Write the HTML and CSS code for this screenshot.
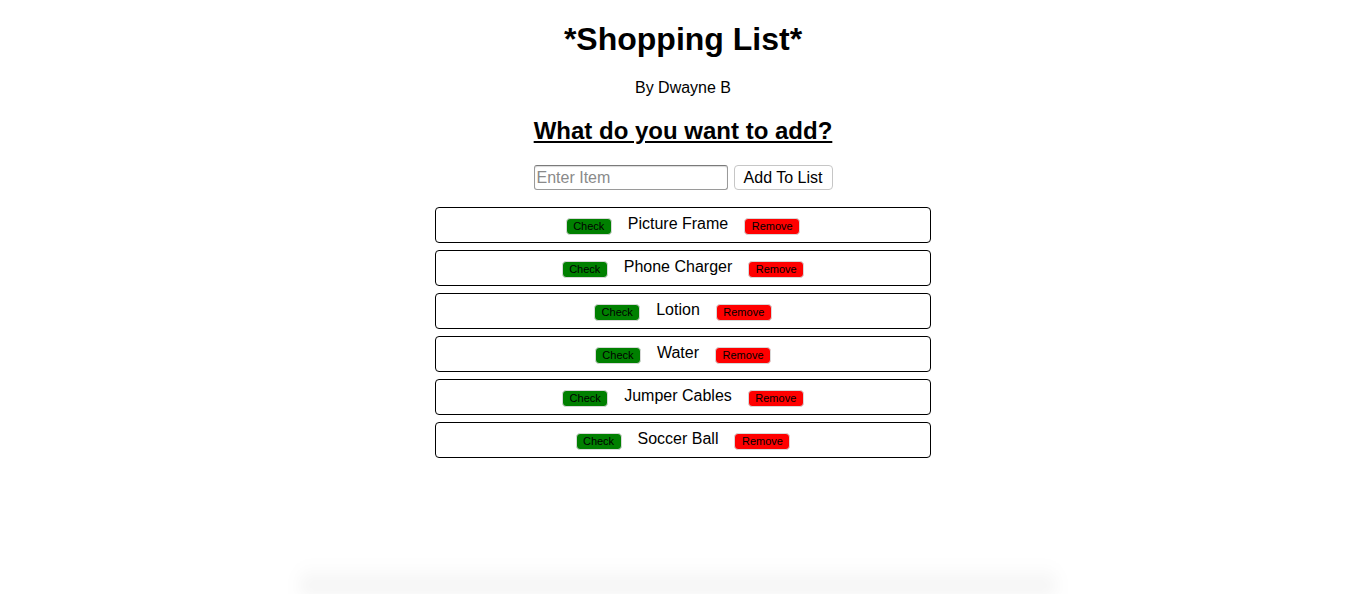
FILE: index.html
```html
<!DOCTYPE html>
<html>
<head>
<meta charset="utf-8">
<title>Shopping List</title>
<link rel="stylesheet" href="styles.css">
</head>
<body>
<div class="page">
  <h1 class="title">*Shopping List*</h1>
  <p class="byline">By Dwayne B</p>
  <h2 class="prompt">What do you want to add?</h2>
  <form class="add-form">
    <input class="item-input" type="text" placeholder="Enter Item">
    <button class="add-btn" type="button">Add To List</button>
  </form>
  <ul class="list">
    <li class="item"><button class="btn check">Check</button><span class="name">Picture Frame</span><button class="btn remove">Remove</button></li>
    <li class="item"><button class="btn check">Check</button><span class="name">Phone Charger</span><button class="btn remove">Remove</button></li>
    <li class="item"><button class="btn check">Check</button><span class="name">Lotion</span><button class="btn remove">Remove</button></li>
    <li class="item"><button class="btn check">Check</button><span class="name">Water</span><button class="btn remove">Remove</button></li>
    <li class="item"><button class="btn check">Check</button><span class="name">Jumper Cables</span><button class="btn remove">Remove</button></li>
    <li class="item"><button class="btn check">Check</button><span class="name">Soccer Ball</span><button class="btn remove">Remove</button></li>
  </ul>
</div>
<div class="shadow"></div>
</body>
</html>
```
FILE: styles.css
```css
html, body {
  height: 100%;
}
body {
  margin: 0;
  font-family: "Liberation Sans", Arial, sans-serif;
  color: #000;
  background: #fff;
  overflow: hidden;
}
.page {
  padding-top: 21px;
  text-align: center;
}
.title {
  font-size: 32px;
  font-weight: bold;
  margin: 0 0 21px;
  line-height: 37px;
}
.byline {
  font-size: 16px;
  margin: 0 0 20px;
  line-height: 18px;
}
.prompt {
  font-size: 24px;
  font-weight: bold;
  text-decoration: underline;
  margin: 0 0 20px;
  line-height: 28px;
}
.add-form {
  display: flex;
  justify-content: center;
  align-items: center;
  gap: 6px;
  margin: 0;
}
.item-input {
  width: 194px;
  height: 25px;
  box-sizing: border-box;
  font-family: "Liberation Sans", Arial, sans-serif;
  font-size: 16px;
  padding: 1px 2px;
  border: 1px solid #9a9a9a;
  border-top-color: #7a7a7a;
  border-radius: 3px;
  box-shadow: inset 0 1px 1px rgba(0,0,0,0.15);
}
.item-input::placeholder {
  color: #8a8a8a;
}
.add-btn {
  height: 25px;
  width: 99px;
  box-sizing: border-box;
  font-family: "Liberation Sans", Arial, sans-serif;
  font-size: 16px;
  background: #fff;
  border: 1px solid #c6c6c6;
  border-radius: 4px;
  padding: 0 6px;
  color: #000;
}
.list {
  list-style: none;
  padding: 0;
  margin: 17px auto 0;
  width: 496px;
  display: flex;
  flex-direction: column;
  gap: 7px;
}
.item {
  height: 36px;
  box-sizing: border-box;
  border: 1px solid #000;
  border-radius: 4px;
  display: flex;
  justify-content: center;
  align-items: center;
  gap: 16px;
}
.name {
  font-size: 16px;
  line-height: 18px;
  position: relative;
  top: -1px;
}
.btn {
  font-family: "Liberation Sans", Arial, sans-serif;
  font-size: 11px;
  height: 17px;
  box-sizing: border-box;
  border: 1px solid #d8d8d8;
  border-radius: 4px;
  color: #000;
  padding: 0 4px;
  line-height: 15px;
  position: relative;
  top: 1px;
}
.check {
  background: #008000;
  width: 46px;
}
.remove {
  background: #ff0000;
  width: 56px;
}
.shadow {
  position: fixed;
  left: 300px;
  right: 310px;
  bottom: 0;
  height: 30px;
  background: linear-gradient(to bottom, rgba(0,0,0,0), rgba(0,0,0,0.06));
  filter: blur(8px);
  pointer-events: none;
}
```
